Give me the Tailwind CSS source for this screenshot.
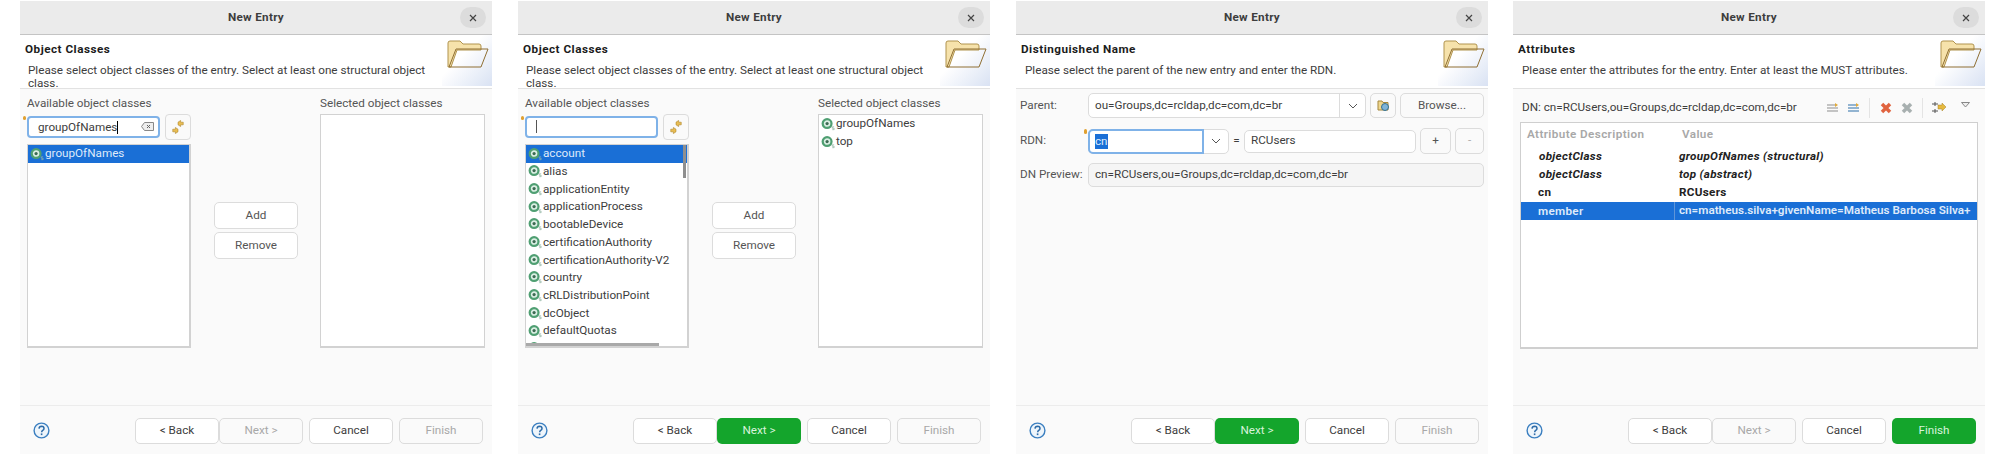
<!DOCTYPE html>
<html lang="en">
<head>
  <meta charset="UTF-8" />
  <title>New Entry</title>
  <script src="https://cdn.jsdelivr.net/npm/@tailwindcss/browser@4"></script>
</head>
<body class="bg-white font-['Roboto',sans-serif] text-[11.7px] text-[#3d3d3d] overflow-hidden">

  <!-- shared icons -->
  <svg class="hidden">
    <defs>
      <linearGradient id="fold" x1="0" y1="0" x2="0" y2="1"><stop offset="0" stop-color="#fdf0c0"/><stop offset="1" stop-color="#e3b65e"/></linearGradient>
      <symbol id="folder" viewBox="0 0 42 30">
        <path d="M1 28V4q0-2 2-2h10l3 3h16q2 0 2 2v4H10L4 28z" fill="#f6e2ab" stroke="#b0934f"/>
        <path d="M9 10h32l-7 18H2z" fill="url(#fold)" stroke="#8f6f33"/>
      </symbol>
      <symbol id="oc" viewBox="0 0 16 16">
        <circle cx="6.500" cy="7" r="4.700" fill="#dcefe4" stroke="#4f9f72" stroke-width="2.400"/>
        <circle cx="6.500" cy="7" r="1.700" fill="#3c6a52"/>
        <path d="M14 10.500h-2v1.500h2v1.500h-2" fill="none" stroke="#8fb3a2" stroke-width=".8"/>
      </symbol>
      <symbol id="sync" viewBox="0 0 16 16">
        <path d="M8 2.500l3-2v2h3v3h-3v2L8 5.500z" fill="#e9bd52" stroke="#a67c1f" stroke-width=".6"/>
        <path d="M8 13.500l-3 2v-2H2v-3h3v-2l3 2z" fill="#e9bd52" stroke="#a67c1f" stroke-width=".6"/>
      </symbol>
      <symbol id="help" viewBox="0 0 17 17">
        <circle cx="8.500" cy="8.500" r="7.400" fill="#eef5fb" stroke="#3b7fc0" stroke-width="1.400"/>
        <path d="M6 6.600q.2-2.300 2.600-2.300 2.400.1 2.400 2.100 0 1.200-1.300 2-1 .6-1 1.800" fill="none" stroke="#2d6ba8" stroke-width="1.500"/>
        <rect x="7.800" y="11.400" width="1.600" height="1.700" fill="#2d6ba8"/>
      </symbol>
      <symbol id="chev" viewBox="0 0 10 6"><path d="M1 1l4 4 4-4" fill="none" stroke="#555" stroke-width="1"/></symbol>
    </defs>
  </svg>

  <main class="flex pl-5 pt-px">

    <!-- step 1 -->
    <section class="w-[472px] h-[453px] shrink-0 flex flex-col bg-[#fafafa]">
      <div class="h-[34px] shrink-0 relative flex items-center justify-center bg-[#ebebeb] border-b border-[#c4c4c4] font-bold tracking-[0.3px]">New Entry<span class="absolute right-[6px] top-[6px] w-[26px] h-[21px] rounded-full bg-[#dcdcdc] flex items-center justify-center"><svg width="8" height="8" viewBox="0 0 8 8"><path d="M1 1l6 6M7 1L1 7" stroke="#444" stroke-width="1.200"/></svg></span></div>
      <div class="h-[54px] shrink-0 flex justify-between bg-white border-b border-[#e2e2e2]">
        <div class="pl-[5px] pt-[6px] min-w-0"><div class="font-bold text-[#1c1c1c] leading-[17px] tracking-[0.5px]">Object Classes</div><div class="pl-[3px] pt-[6px] leading-[13px] whitespace-nowrap">Please select object classes of the entry. Select at least one structural object<br>class.</div></div>
        <div class="w-[50px] h-[51px] shrink-0 flex justify-end pr-[3px] pt-[4px] bg-gradient-to-br from-white from-40% to-[#d9e2f3]"><svg width="42" height="30"><use href="#folder"/></svg></div>
      </div>
      <div class="h-[316px] shrink-0 flex pl-[7px] pr-[7px] text-[#555]">
        <div class="w-[164px] shrink-0">
          <div class="h-[25px] pt-[6px] leading-4">Available object classes</div>
          <div class="flex items-center justify-between h-[25px]">
            <div class="relative w-[133px] h-[22px] bg-white rounded-[4px] border-2 border-[#7fb2e8] pl-[9px] flex items-center justify-between pr-[4px] text-[#3d3d3d] leading-4">
              <span class="absolute -left-[6px] -top-[2px] w-[3px] h-[4px] rounded-full bg-[#e0a030]"></span>
              <span>groupOfNames<span class="inline-block w-px h-[13px] bg-black align-middle"></span></span><svg width="13" height="9" viewBox="0 0 13 9"><path d="M3.500.5h9v8h-9L.5 4.500z" fill="#eee" stroke="#888"/><path d="M6 3l3 3M9 3L6 6" stroke="#666"/></svg>
            </div>
            <div class="w-[26px] h-[26px] bg-[#fafafa] rounded-[4px] border border-[#dcdcdc] flex items-center justify-center"><svg width="14" height="14"><use href="#sync"/></svg></div>
          </div>
          <div class="mt-[5px] h-[204px] bg-white border border-[#d2d2d2] border-r-2 border-b-2 overflow-hidden">
            <div class="h-[18px] bg-[#1a6fd6] text-[#dfeafa] flex items-center pl-[2px]"><svg width="15" height="15"><use href="#oc"/></svg>groupOfNames</div>
          </div>
        </div>
        <div class="flex-1 flex flex-col items-center pt-[113px] pl-px">
          <button class="w-[84px] h-[27px] bg-white rounded-[5px] border border-[#dcdcdc] text-[#555]">Add</button>
          <button class="w-[84px] h-[27px] mt-[3px] bg-white rounded-[5px] border border-[#dcdcdc] text-[#555]">Remove</button>
        </div>
        <div class="w-[165px] shrink-0">
          <div class="h-[25px] pt-[6px] leading-4">Selected object classes</div>
          <div class="h-[234px] bg-white border border-[#d2d2d2] border-b-2"></div>
        </div>
      </div>
      <div class="flex-1 flex items-center border-t border-[#ececec] pl-[13px] pt-[1px] pr-[9px]">
        <svg width="17" height="17"><use href="#help"/></svg>
        <div class="ml-auto flex">
          <button class="w-[84px] h-[26px] bg-white rounded-[5px] border border-[#dcdcdc]">&lt; Back</button>
          <button class="w-[84px] h-[26px] rounded-[5px] border border-[#dcdcdc] text-[#a8a8a8]">Next &gt;</button>
          <button class="w-[84px] h-[26px] ml-[6px] bg-white rounded-[5px] border border-[#dcdcdc]">Cancel</button>
          <button class="w-[84px] h-[26px] ml-[6px] rounded-[5px] border border-[#dcdcdc] text-[#a8a8a8]">Finish</button>
        </div>
      </div>
    </section>

    <!-- step 1, filter emptied -->
    <section class="w-[472px] h-[453px] shrink-0 ml-[26px] flex flex-col bg-[#fafafa]">
      <div class="h-[34px] shrink-0 relative flex items-center justify-center bg-[#ebebeb] border-b border-[#c4c4c4] font-bold tracking-[0.3px]">New Entry<span class="absolute right-[6px] top-[6px] w-[26px] h-[21px] rounded-full bg-[#dcdcdc] flex items-center justify-center"><svg width="8" height="8" viewBox="0 0 8 8"><path d="M1 1l6 6M7 1L1 7" stroke="#444" stroke-width="1.200"/></svg></span></div>
      <div class="h-[54px] shrink-0 flex justify-between bg-white border-b border-[#e2e2e2]">
        <div class="pl-[5px] pt-[6px] min-w-0"><div class="font-bold text-[#1c1c1c] leading-[17px] tracking-[0.5px]">Object Classes</div><div class="pl-[3px] pt-[6px] leading-[13px] whitespace-nowrap">Please select object classes of the entry. Select at least one structural object<br>class.</div></div>
        <div class="w-[50px] h-[51px] shrink-0 flex justify-end pr-[3px] pt-[4px] bg-gradient-to-br from-white from-40% to-[#d9e2f3]"><svg width="42" height="30"><use href="#folder"/></svg></div>
      </div>
      <div class="h-[316px] shrink-0 flex pl-[7px] pr-[7px] text-[#555]">
        <div class="w-[164px] shrink-0">
          <div class="h-[25px] pt-[6px] leading-4">Available object classes</div>
          <div class="flex items-center justify-between h-[25px]">
            <div class="relative w-[133px] h-[22px] bg-white rounded-[4px] border-2 border-[#7fb2e8] pl-[9px] flex items-center">
              <span class="absolute -left-[6px] -top-[2px] w-[3px] h-[4px] rounded-full bg-[#e0a030]"></span>
              <span class="inline-block w-px h-[13px] bg-[#555]"></span>
            </div>
            <div class="w-[26px] h-[26px] bg-[#fafafa] rounded-[4px] border border-[#dcdcdc] flex items-center justify-center"><svg width="14" height="14"><use href="#sync"/></svg></div>
          </div>
          <div class="relative mt-[5px] h-[204px] bg-white border border-[#d2d2d2] border-r-2 border-b-2 overflow-hidden text-[#3d3d3d]">
            <div class="h-[18px] bg-[#1a6fd6] text-[#dfeafa] flex items-center pl-[2px]"><svg width="15" height="15"><use href="#oc"/></svg>account</div>
            <div class="h-[17.700px] flex items-center pl-[2px]"><svg width="15" height="15"><use href="#oc"/></svg>alias</div>
            <div class="h-[17.700px] flex items-center pl-[2px]"><svg width="15" height="15"><use href="#oc"/></svg>applicationEntity</div>
            <div class="h-[17.700px] flex items-center pl-[2px]"><svg width="15" height="15"><use href="#oc"/></svg>applicationProcess</div>
            <div class="h-[17.700px] flex items-center pl-[2px]"><svg width="15" height="15"><use href="#oc"/></svg>bootableDevice</div>
            <div class="h-[17.700px] flex items-center pl-[2px]"><svg width="15" height="15"><use href="#oc"/></svg>certificationAuthority</div>
            <div class="h-[17.700px] flex items-center pl-[2px]"><svg width="15" height="15"><use href="#oc"/></svg>certificationAuthority-V2</div>
            <div class="h-[17.700px] flex items-center pl-[2px]"><svg width="15" height="15"><use href="#oc"/></svg>country</div>
            <div class="h-[17.700px] flex items-center pl-[2px]"><svg width="15" height="15"><use href="#oc"/></svg>cRLDistributionPoint</div>
            <div class="h-[17.700px] flex items-center pl-[2px]"><svg width="15" height="15"><use href="#oc"/></svg>dcObject</div>
            <div class="h-[17.700px] flex items-center pl-[2px]"><svg width="15" height="15"><use href="#oc"/></svg>defaultQuotas</div>
            <div class="h-[17.700px] flex items-center pl-[2px]"><svg width="15" height="15"><use href="#oc"/></svg>deltaCRL</div>
            <span class="absolute right-[1px] top-0 w-[3px] h-[33px] bg-[#8f8f8f]"></span>
            <span class="absolute left-0 bottom-0 w-[133px] h-[3px] bg-[#a9a9a9]"></span>
          </div>
        </div>
        <div class="flex-1 flex flex-col items-center pt-[113px] pl-px">
          <button class="w-[84px] h-[27px] bg-white rounded-[5px] border border-[#dcdcdc] text-[#555]">Add</button>
          <button class="w-[84px] h-[27px] mt-[3px] bg-white rounded-[5px] border border-[#dcdcdc] text-[#555]">Remove</button>
        </div>
        <div class="w-[165px] shrink-0">
          <div class="h-[25px] pt-[6px] leading-4">Selected object classes</div>
          <div class="h-[234px] bg-white border border-[#d2d2d2] border-b-2 pl-[2px] text-[#3d3d3d]">
            <div class="h-[18px] flex items-center"><svg width="15" height="15"><use href="#oc"/></svg>groupOfNames</div>
            <div class="h-[18px] flex items-center"><svg width="15" height="15"><use href="#oc"/></svg>top</div>
          </div>
        </div>
      </div>
      <div class="flex-1 flex items-center border-t border-[#ececec] pl-[13px] pt-[1px] pr-[9px]">
        <svg width="17" height="17"><use href="#help"/></svg>
        <div class="ml-auto flex">
          <button class="w-[84px] h-[26px] bg-white rounded-[5px] border border-[#dcdcdc]">&lt; Back</button>
          <button class="w-[84px] h-[26px] rounded-[5px] bg-[#14a52c] text-[#d8f3dc]">Next &gt;</button>
          <button class="w-[84px] h-[26px] ml-[6px] bg-white rounded-[5px] border border-[#dcdcdc]">Cancel</button>
          <button class="w-[84px] h-[26px] ml-[6px] rounded-[5px] border border-[#dcdcdc] text-[#a8a8a8]">Finish</button>
        </div>
      </div>
    </section>

    <!-- step 2 -->
    <section class="w-[472px] h-[453px] shrink-0 ml-[26px] flex flex-col bg-[#fafafa]">
      <div class="h-[34px] shrink-0 relative flex items-center justify-center bg-[#ebebeb] border-b border-[#c4c4c4] font-bold tracking-[0.3px]">New Entry<span class="absolute right-[6px] top-[6px] w-[26px] h-[21px] rounded-full bg-[#dcdcdc] flex items-center justify-center"><svg width="8" height="8" viewBox="0 0 8 8"><path d="M1 1l6 6M7 1L1 7" stroke="#444" stroke-width="1.200"/></svg></span></div>
      <div class="h-[54px] shrink-0 flex justify-between bg-white border-b border-[#e2e2e2]">
        <div class="pl-[5px] pt-[6px] min-w-0"><div class="font-bold text-[#1c1c1c] leading-[17px] tracking-[0.5px]">Distinguished Name</div><div class="pl-[4px] pt-[6px] leading-[13px] whitespace-nowrap">Please select the parent of the new entry and enter the RDN.</div></div>
        <div class="w-[50px] h-[51px] shrink-0 flex justify-end pr-[3px] pt-[4px] bg-gradient-to-br from-white from-40% to-[#d9e2f3]"><svg width="42" height="30"><use href="#folder"/></svg></div>
      </div>
      <div class="h-[316px] shrink-0 pl-1 pr-1 pt-1 text-[#3d3d3d]">
        <div class="flex items-center h-[25px]">
          <span class="w-[68px] text-[#555]">Parent:</span>
          <div class="w-[278px] h-[25px] bg-white rounded-[5px] border border-[#dcdcdc] flex items-center pl-[6px]"><span class="flex-1">ou=Groups,dc=rcldap,dc=com,dc=br</span><span class="w-[26px] h-full border-l border-[#dcdcdc] flex items-center justify-center"><svg width="10" height="6"><use href="#chev"/></svg></span></div>
          <div class="w-[26px] h-[25px] ml-[4px] bg-[#fafafa] rounded-[5px] border border-[#dcdcdc] flex items-center justify-center"><svg width="13" height="13" viewBox="0 0 13 13"><path d="M1 11V2h4l1 1.500h5V11z" fill="#efd68d" stroke="#a5873f"/><circle cx="8" cy="8" r="3.500" fill="#7fb4d9" stroke="#35718f"/></svg></div>
          <button class="w-[84px] h-[25px] ml-[4px] bg-[#fafafa] rounded-[5px] border border-[#dcdcdc] text-[#555]">Browse...</button>
        </div>
        <div class="flex items-center h-[26px] mt-[10px]">
          <span class="w-[68px] text-[#555]">RDN:</span>
          <div class="relative w-[141px] h-[25px] bg-white rounded-[5px] border border-[#dcdcdc] flex">
            <span class="absolute -left-[5px] -top-[1px] w-[3px] h-[5px] rounded-full bg-[#e0a030]"></span>
            <div class="w-[116px] -m-px mr-0 h-[25px] border-2 border-[#7fb2e8] rounded-l-[5px] pl-[5px] flex items-center"><span class="bg-[#1a6fd6] text-[#dfeafa] leading-[15px]">cn</span></div>
            <span class="flex-1 flex items-center justify-center"><svg width="10" height="6"><use href="#chev"/></svg></span>
          </div>
          <span class="w-[15px] text-center">=</span>
          <div class="w-[172px] h-[23px] bg-white rounded-[5px] border border-[#dcdcdc] pl-[6px] flex items-center">RCUsers</div>
          <button class="w-[31px] h-[26px] ml-[4px] bg-[#fafafa] rounded-[5px] border border-[#dcdcdc] text-[#555]">+</button>
          <button class="w-[29px] h-[26px] ml-[4px] rounded-[5px] border border-[#dcdcdc] text-[#aaa]">-</button>
        </div>
        <div class="flex items-center h-[24px] mt-[9px]">
          <span class="w-[68px] text-[#555] whitespace-nowrap">DN Preview:</span>
          <div class="w-[396px] h-[24px] bg-[#f5f5f5] rounded-[5px] border border-[#dcdcdc] pl-[6px] flex items-center">cn=RCUsers,ou=Groups,dc=rcldap,dc=com,dc=br</div>
        </div>
      </div>
      <div class="flex-1 flex items-center border-t border-[#ececec] pl-[13px] pt-[1px] pr-[9px]">
        <svg width="17" height="17"><use href="#help"/></svg>
        <div class="ml-auto flex">
          <button class="w-[84px] h-[26px] bg-white rounded-[5px] border border-[#dcdcdc]">&lt; Back</button>
          <button class="w-[84px] h-[26px] rounded-[5px] bg-[#14a52c] text-[#d8f3dc]">Next &gt;</button>
          <button class="w-[84px] h-[26px] ml-[6px] bg-white rounded-[5px] border border-[#dcdcdc]">Cancel</button>
          <button class="w-[84px] h-[26px] ml-[6px] rounded-[5px] border border-[#dcdcdc] text-[#a8a8a8]">Finish</button>
        </div>
      </div>
    </section>

    <!-- step 3 -->
    <section class="w-[472px] h-[453px] shrink-0 ml-[25px] flex flex-col bg-[#fafafa]">
      <div class="h-[34px] shrink-0 relative flex items-center justify-center bg-[#ebebeb] border-b border-[#c4c4c4] font-bold tracking-[0.3px]">New Entry<span class="absolute right-[6px] top-[6px] w-[26px] h-[21px] rounded-full bg-[#dcdcdc] flex items-center justify-center"><svg width="8" height="8" viewBox="0 0 8 8"><path d="M1 1l6 6M7 1L1 7" stroke="#444" stroke-width="1.200"/></svg></span></div>
      <div class="h-[54px] shrink-0 flex justify-between bg-white border-b border-[#e2e2e2]">
        <div class="pl-[5px] pt-[6px] min-w-0"><div class="font-bold text-[#1c1c1c] leading-[17px] tracking-[0.5px]">Attributes</div><div class="pl-[4px] pt-[6px] leading-[13px] whitespace-nowrap">Please enter the attributes for the entry. Enter at least the MUST attributes.</div></div>
        <div class="w-[50px] h-[51px] shrink-0 flex justify-end pr-[3px] pt-[4px] bg-gradient-to-br from-white from-40% to-[#d9e2f3]"><svg width="42" height="30"><use href="#folder"/></svg></div>
      </div>
      <div class="h-[316px] shrink-0 text-[#3d3d3d]">
        <div class="flex items-center h-[33px] pt-[4px] pl-[9px] pr-[15px]">
          <span class="flex-1 whitespace-nowrap">DN: cn=RCUsers,ou=Groups,dc=rcldap,dc=com,dc=br</span>
          <svg width="12" height="10" viewBox="0 0 12 10"><path d="M0 2h8M0 5h11M0 8h11" stroke="#8d8d8d"/><path d="M8 0l3 2-3 2z" fill="#e0a93a"/></svg>
          <svg class="ml-[9px]" width="12" height="10" viewBox="0 0 12 10"><path d="M0 2h8M0 5h11M0 8h11" stroke="#2d6fa8"/><path d="M8 0l3 2-3 2z" fill="#e0a93a"/></svg>
          <span class="w-px h-5 ml-[9px] bg-[#e4e4e4]"></span>
          <svg class="ml-[10px]" width="12" height="12" viewBox="0 0 12 12"><path d="M2 2l8 8M10 2l-8 8" stroke="#e0633f" stroke-width="3.500"/></svg>
          <svg class="ml-[9px]" width="12" height="12" viewBox="0 0 12 12"><path d="M2 2l8 8M10 2l-8 8" stroke="#a8b0b0" stroke-width="3.500"/></svg>
          <span class="w-px h-5 ml-[9px] bg-[#e4e4e4]"></span>
          <svg class="ml-[9px]" width="14" height="13" viewBox="0 0 14 13"><path d="M0 3h6M0 10h6M3 1v4M3 8v4" stroke="#555"/><path d="M6 4h4V2l4 4-4 4V8H6z" fill="#e6b93f" stroke="#a5832a" stroke-width=".5"/></svg>
          <svg class="ml-[15px] -mt-[5px]" width="9" height="6" viewBox="0 0 9 6"><path d="M.5.5h8L4.500 5z" fill="#eee" stroke="#888"/></svg>
        </div>
        <div class="ml-[7px] w-[458px] h-[227px] bg-white border border-[#cfcfcf] border-b-2 overflow-hidden">
          <div class="h-6 flex items-center text-[#a8a8a8] font-semibold tracking-[0.4px]"><span class="w-[154px] pl-[6px]">Attribute Description</span><span class="pl-[7px]">Value</span></div>
          <div class="h-[18px] mt-[1px] flex items-center italic font-bold text-[#222] tracking-[0.3px]"><span class="w-[154px] pl-[18px]">objectClass</span><span class="pl-[4px]">groupOfNames (structural)</span></div>
          <div class="h-[18px] flex items-center italic font-bold text-[#222] tracking-[0.3px]"><span class="w-[154px] pl-[18px]">objectClass</span><span class="pl-[4px]">top (abstract)</span></div>
          <div class="h-[18px] flex items-center font-bold text-[#222] tracking-[0.3px]"><span class="w-[154px] pl-[17px]">cn</span><span class="pl-[4px]">RCUsers</span></div>
          <div class="h-[18px] flex items-center font-semibold bg-[#1a6fd6] text-[#dfeafa] whitespace-nowrap"><span class="w-[154px] shrink-0 pl-[17px] border-r border-[#5f95d8] leading-[18px] tracking-[0.3px]">member</span><span class="pl-[4px]">cn=matheus.silva+givenName=Matheus Barbosa Silva+</span></div>
        </div>
      </div>
      <div class="flex-1 flex items-center border-t border-[#ececec] pl-[13px] pt-[1px] pr-[9px]">
        <svg width="17" height="17"><use href="#help"/></svg>
        <div class="ml-auto flex">
          <button class="w-[84px] h-[26px] bg-white rounded-[5px] border border-[#dcdcdc]">&lt; Back</button>
          <button class="w-[84px] h-[26px] rounded-[5px] border border-[#dcdcdc] text-[#a8a8a8]">Next &gt;</button>
          <button class="w-[84px] h-[26px] ml-[6px] bg-white rounded-[5px] border border-[#dcdcdc]">Cancel</button>
          <button class="w-[84px] h-[26px] ml-[6px] rounded-[5px] bg-[#14a52c] text-[#d8f3dc]">Finish</button>
        </div>
      </div>
    </section>

  </main>
</body>
</html>
